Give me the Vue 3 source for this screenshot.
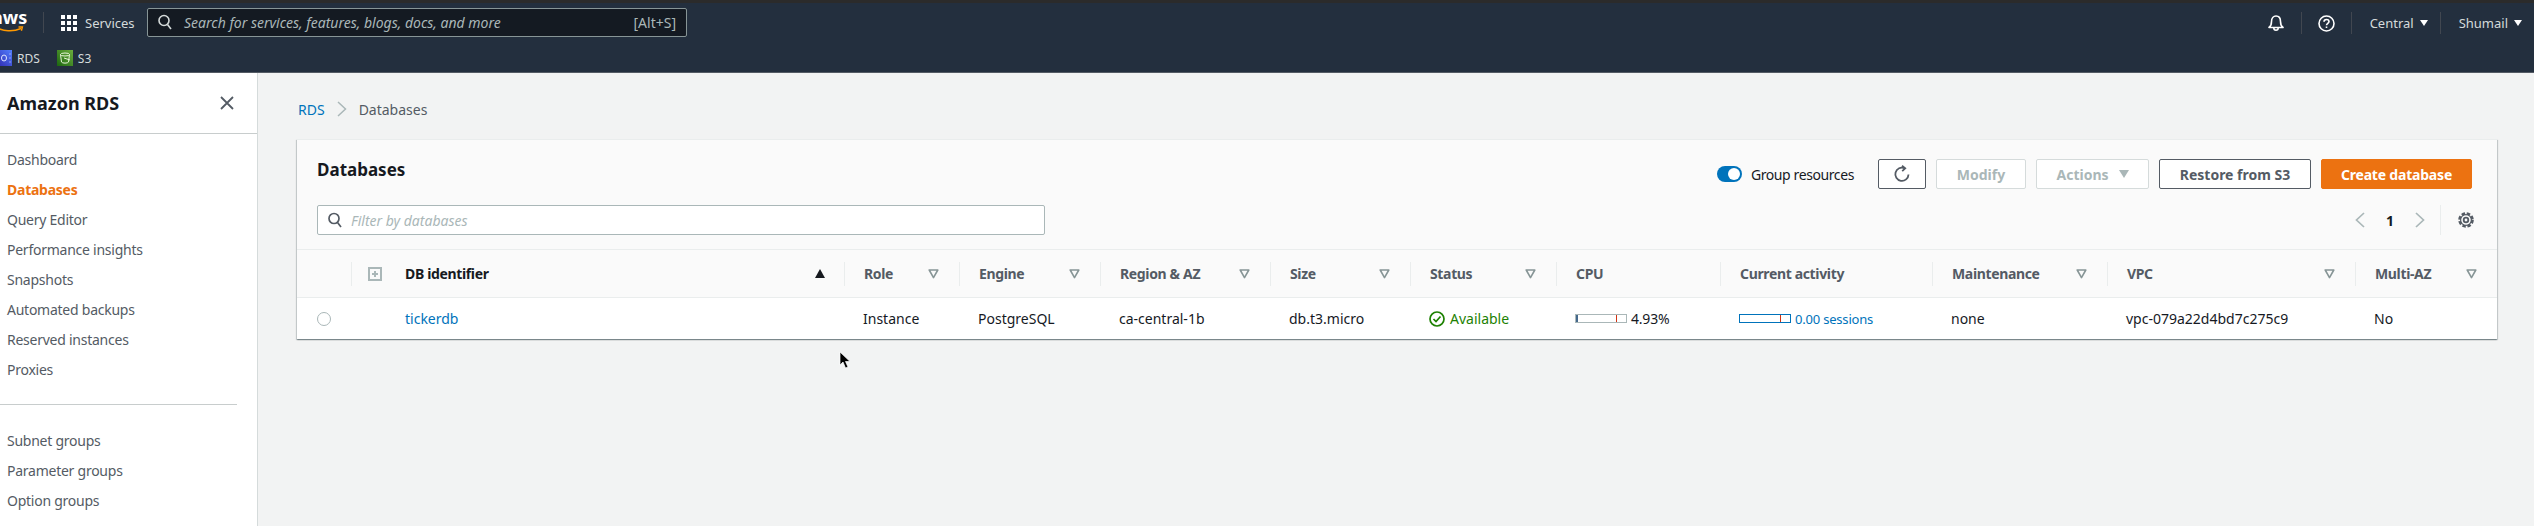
<script setup>
const navTop = ['Dashboard', 'Databases', 'Query Editor', 'Performance insights', 'Snapshots', 'Automated backups', 'Reserved instances', 'Proxies']
const navBottom = ['Subnet groups', 'Parameter groups', 'Option groups']

const columns = [
  { label: 'Role', value: 'Instance', filter: true },
  { label: 'Engine', value: 'PostgreSQL', filter: true },
  { label: 'Region & AZ', value: 'ca-central-1b', filter: true },
  { label: 'Size', value: 'db.t3.micro', filter: true },
  { label: 'Status', type: 'status', filter: true },
  { label: 'CPU', type: 'cpu' },
  { label: 'Current activity', type: 'activity' },
  { label: 'Maintenance', value: 'none', filter: true },
  { label: 'VPC', value: 'vpc-079a22d4bd7c275c9', filter: true },
  { label: 'Multi-AZ', value: 'No', filter: true }
]
</script>

<template>
  <div class="page">
    <div class="strip"></div>

    <header class="nav">
      <div class="logo">
        <span class="logo-text">aws</span>
        <svg class="smile" width="30" height="7" viewBox="0 0 30 7">
          <path d="M0 1C7 5.500 17 6 25 2.500" fill="none" stroke="#ff9900" stroke-width="1.600" />
          <path d="M22.500 1L26.400 1L25.400 4.800" fill="none" stroke="#ff9900" stroke-width="1.400" />
        </svg>
      </div>
      <div class="services">
        <svg width="16" height="16" viewBox="0 0 16 16" fill="#fff">
          <rect x="0" y="0" width="4" height="4" /><rect x="6" y="0" width="4" height="4" /><rect x="12" y="0" width="4" height="4" />
          <rect x="0" y="6" width="4" height="4" /><rect x="6" y="6" width="4" height="4" /><rect x="12" y="6" width="4" height="4" />
          <rect x="0" y="12" width="4" height="4" /><rect x="6" y="12" width="4" height="4" /><rect x="12" y="12" width="4" height="4" />
        </svg>
        <span>Services</span>
      </div>
      <div class="global-search">
        <svg width="14" height="16" viewBox="0 0 14 16" fill="none" stroke="#d5dbdb" stroke-width="1.600">
          <circle cx="6" cy="6.500" r="5" /><path d="M9.500 10.500L13 15" />
        </svg>
        <span class="global-placeholder">Search for services, features, blogs, docs, and more</span>
        <span class="shortcut">[Alt+S]</span>
      </div>
      <div class="nav-right">
        <div class="nav-item icon-item">
          <svg width="16" height="18" viewBox="0 0 16 18" fill="none" stroke="#fff" stroke-width="1.600">
            <path d="M1 13.500C3 12 3.500 10.500 3.500 7.500C3.500 4 5.500 2 8 2s4.500 2 4.500 5.500C12.500 10.500 13 12 15 13.500Z" stroke-linejoin="round" />
            <path d="M5.800 14A2.200 2.200 0 0 0 10.200 14" />
          </svg>
        </div>
        <div class="nav-item icon-item">
          <svg width="17" height="17" viewBox="0 0 17 17" fill="none" stroke="#fff" stroke-width="1.600">
            <circle cx="8.500" cy="8.500" r="7.500" />
            <path d="M6 6.800C6 5.300 7.100 4.500 8.500 4.500C10 4.500 11 5.400 11 6.600C11 8.300 8.500 8.400 8.500 10.300" />
            <path d="M8.500 11.500V13" />
          </svg>
        </div>
        <div class="nav-item region">Central<i class="nav-caret"></i></div>
        <div class="nav-item user">Shumail<i class="nav-caret"></i></div>
      </div>
    </header>

    <div class="favorites">
      <div class="fav">
        <span class="fav-icon rds-icon">
          <svg width="16" height="16" viewBox="0 0 16 16" fill="none" stroke="#dfe6ff" stroke-width="1">
            <ellipse cx="8" cy="8" rx="2.500" ry="3" />
            <path d="M2 5v6M13.500 4h1M13.500 8h1M13.500 12h1M1 3h1M1 13h1" />
          </svg>
        </span>
        <span>RDS</span>
      </div>
      <div class="fav">
        <span class="fav-icon s3-icon">
          <svg width="16" height="16" viewBox="0 0 16 16" fill="none" stroke="#e6f4d8" stroke-width="1">
            <ellipse cx="8" cy="4.500" rx="4.500" ry="1.500" />
            <path d="M3.500 4.500L4.500 12C5 13.500 11 13.500 11.500 12L12.500 4.500M7 8L13 10" />
          </svg>
        </span>
        <span>S3</span>
      </div>
    </div>

    <div class="body">
      <aside class="sidebar">
        <div class="side-head">
          <span class="side-title">Amazon RDS</span>
          <svg width="14" height="14" viewBox="0 0 14 14" fill="none" stroke="#545b64" stroke-width="1.800">
            <path d="M1 1L13 13M13 1L1 13" />
          </svg>
        </div>
        <ul class="side-list">
          <li v-for="item in navTop" :key="item" :class="{ active: item === 'Databases' }">{{ item }}</li>
        </ul>
        <div class="side-rule"></div>
        <ul class="side-list lower">
          <li v-for="item in navBottom" :key="item">{{ item }}</li>
        </ul>
      </aside>

      <main class="content">
        <div class="crumbs">
          <span class="crumb-link">RDS</span>
          <svg width="10" height="16" viewBox="0 0 10 16" fill="none" stroke="#aab7b8" stroke-width="1.500">
            <path d="M1 1L8.500 8L1 15" />
          </svg>
          <span class="crumb-current">Databases</span>
        </div>

        <section class="card">
          <div class="card-head">
            <div class="card-row">
              <h2 class="card-title">Databases</h2>
              <div class="actions">
                <div class="toggle-wrap">
                  <span class="toggle"><i></i></span>
                  <span class="toggle-label">Group resources</span>
                </div>
                <button class="btn refresh">
                  <svg width="18" height="18" viewBox="0 0 18 18" fill="none" stroke="#545b64" stroke-width="1.800">
                    <path d="M11.500 3.200A6.600 6.600 0 1 0 15.500 9.500" />
                    <path d="M9 0.800L12.200 3.300L9.200 6.200" />
                  </svg>
                </button>
                <button class="btn disabled modify">Modify</button>
                <button class="btn disabled actions-btn">Actions<i class="btn-caret"></i></button>
                <button class="btn restore">Restore from S3</button>
                <button class="btn primary">Create database</button>
              </div>
            </div>
            <div class="card-row filter-row">
              <div class="filter">
                <svg width="14" height="16" viewBox="0 0 14 16" fill="none" stroke="#545b64" stroke-width="1.700">
                  <circle cx="6" cy="6.500" r="5" /><path d="M9.500 10.500L13 15" />
                </svg>
                <span class="filter-placeholder">Filter by databases</span>
              </div>
              <div class="pager">
                <svg width="12" height="16" viewBox="0 0 12 16" fill="none" stroke="#aab7b8" stroke-width="1.700">
                  <path d="M10 1L2.500 8L10 15" />
                </svg>
                <span class="page-num">1</span>
                <svg width="12" height="16" viewBox="0 0 12 16" fill="none" stroke="#aab7b8" stroke-width="1.700">
                  <path d="M2 1L9.500 8L2 15" />
                </svg>
                <span class="pager-gear">
                  <svg width="18" height="18" viewBox="0 0 18 18" fill="none" stroke="#545b64">
                    <circle cx="9" cy="9" r="6.500" stroke-width="2.600" stroke-dasharray="3.400 1.700" />
                    <circle cx="9" cy="9" r="5.400" stroke-width="1.200" />
                    <circle cx="9" cy="9" r="2.300" stroke-width="1.800" />
                  </svg>
                </span>
              </div>
            </div>
          </div>

          <div class="table-grid head-row">
            <div class="th th-select"></div>
            <div class="th th-id">
              <span class="expand"><i></i></span>
              <span class="id-label">DB identifier</span>
              <i class="sort-up"></i>
            </div>
            <div v-for="col in columns" :key="col.label" class="th">
              <span>{{ col.label }}</span>
              <svg v-if="col.filter" class="filter-caret" width="11" height="10" viewBox="0 0 11 10" fill="none" stroke="#879596" stroke-width="1.600">
                <path d="M1.200 1H9.800L5.500 8.600Z" stroke-linejoin="round" />
              </svg>
            </div>
          </div>

          <div class="table-grid body-row">
            <div class="td td-select"><span class="radio"></span></div>
            <div class="td td-id"><span class="link">tickerdb</span></div>
            <div v-for="col in columns" :key="col.label" class="td">
              <template v-if="col.type === 'status'">
                <span class="status">
                  <svg width="16" height="16" viewBox="0 0 16 16" fill="none" stroke="#1d8102" stroke-width="1.700">
                    <circle cx="8" cy="8" r="7" /><path d="M4.500 8L7 10.500L11.500 5.500" />
                  </svg>
                  Available
                </span>
              </template>
              <template v-else-if="col.type === 'cpu'">
                <span class="meter cpu"><i class="fill"></i><i class="mark"></i></span>
                <span class="percent">4.93%</span>
              </template>
              <template v-else-if="col.type === 'activity'">
                <span class="meter activity"><i class="mark"></i></span>
                <span class="link sessions">0.00 sessions</span>
              </template>
              <template v-else>{{ col.value }}</template>
            </div>
          </div>
        </section>
      </main>
    </div>

    <svg class="cursor" width="12" height="19" viewBox="0 0 12 19">
      <path d="M1 1V14L4 11L6.500 17L9 16L6.500 10.500H11Z" fill="#000" stroke="#fff" stroke-width="0.700" />
    </svg>
  </div>
</template>

<style>
html, body {
  margin: 0;
  background: #f2f3f3;
}
</style>

<style scoped>
.page {
  position: relative;
  width: 2534px;
  height: 526px;
  overflow: hidden;
  background: #f2f3f3;
  font-family: "Noto Sans", "Open Sans", sans-serif;
  font-size: 14px;
  color: #16191f;
}

.strip {
  height: 3px;
  background: #2b2b2b;
}

.nav {
  height: 38px;
  display: flex;
  align-items: center;
  background: #232f3e;
  color: #d5dbdb;
  font-size: 13px;
}

.logo {
  width: 43px;
  height: 21px;
  margin-left: -8px;
  padding-left: 8px;
  flex: none;
  position: relative;
  border-right: 1px solid #414750;
  margin-right: 17px;
}

.logo-text {
  position: absolute;
  left: 0;
  top: -9px;
  color: #fff;
  font-size: 18px;
  font-weight: 700;
  line-height: 28px;
}

.smile {
  position: absolute;
  left: 4px;
  top: 14px;
}

.services {
  display: flex;
  align-items: center;
  gap: 8px;
  width: 86px;
  flex: none;
  padding-top: 1px;
  box-sizing: border-box;
  color: #d5dbdb;
}

.global-search {
  width: 540px;
  height: 29px;
  box-sizing: border-box;
  padding: 0 10px;
  display: flex;
  align-items: center;
  gap: 12px;
  background: #141a22;
  border: 1px solid #879596;
  border-radius: 2px;
  font-size: 14px;
}

.global-placeholder {
  flex: 1;
  font-style: italic;
  color: #aab7b8;
}

.shortcut {
  color: #aab7b8;
}

.nav-right {
  margin-left: auto;
  display: flex;
  align-items: center;
  padding: 2px 12px 0 0;
}

.nav-item {
  height: 22px;
  display: flex;
  align-items: center;
  border-left: 1px solid #414750;
  color: #d5dbdb;
}

.nav-item:first-child {
  border-left: none;
}

.icon-item {
  width: 49px;
  justify-content: center;
}

.region {
  width: 89px;
  padding-left: 18px;
  box-sizing: border-box;
}

.user {
  padding-left: 18px;
}

.nav-caret {
  width: 0;
  height: 0;
  margin-left: 6px;
  border-left: 4px solid transparent;
  border-right: 4px solid transparent;
  border-top: 6px solid #fff;
}

.favorites {
  height: 32px;
  box-sizing: border-box;
  padding-top: 3px;
  display: flex;
  align-items: center;
  gap: 17px;
  margin-left: -4px;
  background: #232f3e;
  border-bottom: 1px solid #545b64;
  color: #d5dbdb;
  font-size: 12px;
}

.fav {
  display: flex;
  align-items: center;
  gap: 5px;
}

.fav-icon {
  width: 16px;
  height: 16px;
  display: block;
}

.rds-icon {
  background: linear-gradient(45deg, #2e27ad, #527fff);
}

.s3-icon {
  background: linear-gradient(45deg, #1b660f, #6cae3e);
}

.body {
  display: flex;
  height: 453px;
}

.sidebar {
  width: 258px;
  flex: none;
  box-sizing: border-box;
  background: #fff;
  border-right: 1px solid #d5dbdb;
}

.side-head {
  height: 61px;
  box-sizing: border-box;
  display: flex;
  align-items: center;
  justify-content: space-between;
  padding: 0 23px 0 7px;
  border-bottom: 1px solid #c8cdcd;
}

.side-title {
  font-size: 18px;
  font-weight: 700;
}

.side-list {
  list-style: none;
  margin: 0;
  padding: 11px 0 0;
  letter-spacing: -0.25px;
}

.side-list li {
  height: 30px;
  line-height: 30px;
  padding-left: 7px;
  color: #545b64;
}

.side-list li.active {
  color: #ec7211;
  font-weight: 700;
}

.side-rule {
  width: 237px;
  height: 1px;
  margin-top: 19px;
  background: #c8cdcd;
}

.side-list.lower {
  padding-top: 21px;
}

.content {
  flex: 1;
  min-width: 0;
  padding: 0 37px 0 39px;
}

.crumbs {
  height: 66px;
  display: flex;
  align-items: center;
  gap: 12px;
  padding-left: 1px;
  padding-top: 6px;
  box-sizing: border-box;
}

.crumb-link,
.link {
  color: #0073bb;
}

.crumb-current {
  color: #545b64;
}

.card {
  background: #fff;
  box-shadow: 0 1px 1px 0 rgba(0, 28, 36, 0.3), 1px 1px 1px 0 rgba(0, 28, 36, 0.15), -1px 1px 1px 0 rgba(0, 28, 36, 0.15);
  border-top: 1px solid #eaeded;
}

.card-head {
  height: 110px;
  box-sizing: border-box;
  padding: 18px 25px 0 20px;
  background: #fafafa;
  border-bottom: 1px solid #eaeded;
}

.card-row {
  display: flex;
  align-items: center;
  justify-content: space-between;
}

.card-title {
  margin: 0 0 9px;
  font-size: 17px;
  font-weight: 700;
}

.actions {
  display: flex;
  align-items: center;
  gap: 10px;
}

.toggle-wrap {
  display: flex;
  align-items: center;
  gap: 9px;
  margin-right: 14px;
}

.toggle-label {
  letter-spacing: -0.4px;
}

.toggle {
  width: 25px;
  height: 16px;
  border-radius: 8px;
  background: #0073bb;
  position: relative;
}

.toggle i {
  position: absolute;
  right: 2px;
  top: 2px;
  width: 12px;
  height: 12px;
  border-radius: 50%;
  background: #fff;
}

.btn {
  height: 30px;
  box-sizing: border-box;
  padding: 0;
  display: flex;
  align-items: center;
  justify-content: center;
  background: #fff;
  border: 1px solid #545b64;
  border-radius: 2px;
  color: #545b64;
  font-family: inherit;
  font-size: 14px;
  font-weight: 700;
}

.refresh {
  width: 48px;
}

.disabled {
  background: #fff;
  border-color: #d5dbdb;
  color: #aab7b8;
}

.modify {
  width: 90px;
}

.actions-btn {
  width: 113px;
  gap: 10px;
}

.btn-caret {
  width: 0;
  height: 0;
  border-left: 5px solid transparent;
  border-right: 5px solid transparent;
  border-top: 8px solid #aab7b8;
}

.restore {
  width: 152px;
}

.primary {
  width: 151px;
  background: #ec7211;
  border-color: #ec7211;
  color: #fff;
  letter-spacing: -0.2px;
}

.filter-row {
  margin-top: 15px;
}

.filter {
  width: 728px;
  height: 30px;
  box-sizing: border-box;
  padding: 0 10px;
  display: flex;
  align-items: center;
  gap: 9px;
  background: #fff;
  border: 1px solid #aab7b8;
  border-radius: 2px;
}

.filter-placeholder {
  font-style: italic;
  color: #aab7b8;
}

.pager {
  display: flex;
  align-items: center;
  height: 30px;
  margin-right: -3px;
}

.page-num {
  width: 48px;
  text-align: center;
  font-weight: 700;
}

.pager-gear {
  margin-left: 14px;
  padding-left: 16px;
  height: 30px;
  display: flex;
  align-items: center;
  border-left: 1px solid #eaeded;
}

.table-grid {
  display: grid;
  grid-template-columns: 54px 493px 115px 141px 170px 140px 146px 164px 212px 175px 248px 142px;
}

.head-row {
  height: 48px;
  box-sizing: border-box;
  background: #fafafa;
  border-bottom: 1px solid #eaeded;
  align-items: center;
  letter-spacing: -0.35px;
}

.th {
  height: 24px;
  box-sizing: border-box;
  padding: 0 20px 0 19px;
  display: flex;
  align-items: center;
  justify-content: space-between;
  border-left: 1px solid #eaeded;
  color: #545b64;
  font-weight: 700;
}

.th-select {
  border-left: none;
}

.th-id {
  padding: 0 19px 0 16px;
  color: #16191f;
}

.expand {
  width: 14px;
  height: 14px;
  box-sizing: border-box;
  border: 2px solid #aab7b8;
  position: relative;
  flex: none;
}

.expand i {
  position: absolute;
  left: 2px;
  top: 4px;
  width: 6px;
  height: 2px;
  background: #aab7b8;
}

.expand i::after {
  content: "";
  position: absolute;
  left: 2px;
  top: -2px;
  width: 2px;
  height: 6px;
  background: #aab7b8;
}

.id-label {
  flex: 1;
  margin-left: 23px;
}

.sort-up {
  width: 0;
  height: 0;
  border-left: 5px solid transparent;
  border-right: 5px solid transparent;
  border-bottom: 9px solid #16191f;
}

.filter-caret {
  flex: none;
}

.body-row {
  height: 41px;
  align-items: center;
  background: #fff;
}

.td {
  display: flex;
  align-items: center;
  padding-left: 19px;
  white-space: nowrap;
}

.td-select {
  padding-left: 20px;
}

.td-id {
  padding-left: 54px;
}

.radio {
  width: 14px;
  height: 14px;
  box-sizing: border-box;
  border: 1px solid #aab7b8;
  border-radius: 50%;
}

.status {
  display: flex;
  align-items: center;
  gap: 5px;
  color: #1d8102;
}

.meter {
  width: 52px;
  height: 9px;
  box-sizing: border-box;
  display: block;
  position: relative;
  margin-right: 4px;
  border: 1px solid #aab7b8;
  background: #fff;
}

.meter .mark {
  position: absolute;
  right: 9px;
  top: 0;
  bottom: 0;
  width: 1px;
  background: #d13212;
}

.meter .fill {
  position: absolute;
  left: 0;
  top: 0;
  bottom: 0;
  width: 2px;
  background: #44688c;
}

.percent {
  letter-spacing: -0.2px;
}

.activity {
  border-color: #0073bb;
}

.sessions {
  font-size: 13px;
  letter-spacing: -0.2px;
}

.cursor {
  position: absolute;
  left: 839px;
  top: 351px;
}
</style>
